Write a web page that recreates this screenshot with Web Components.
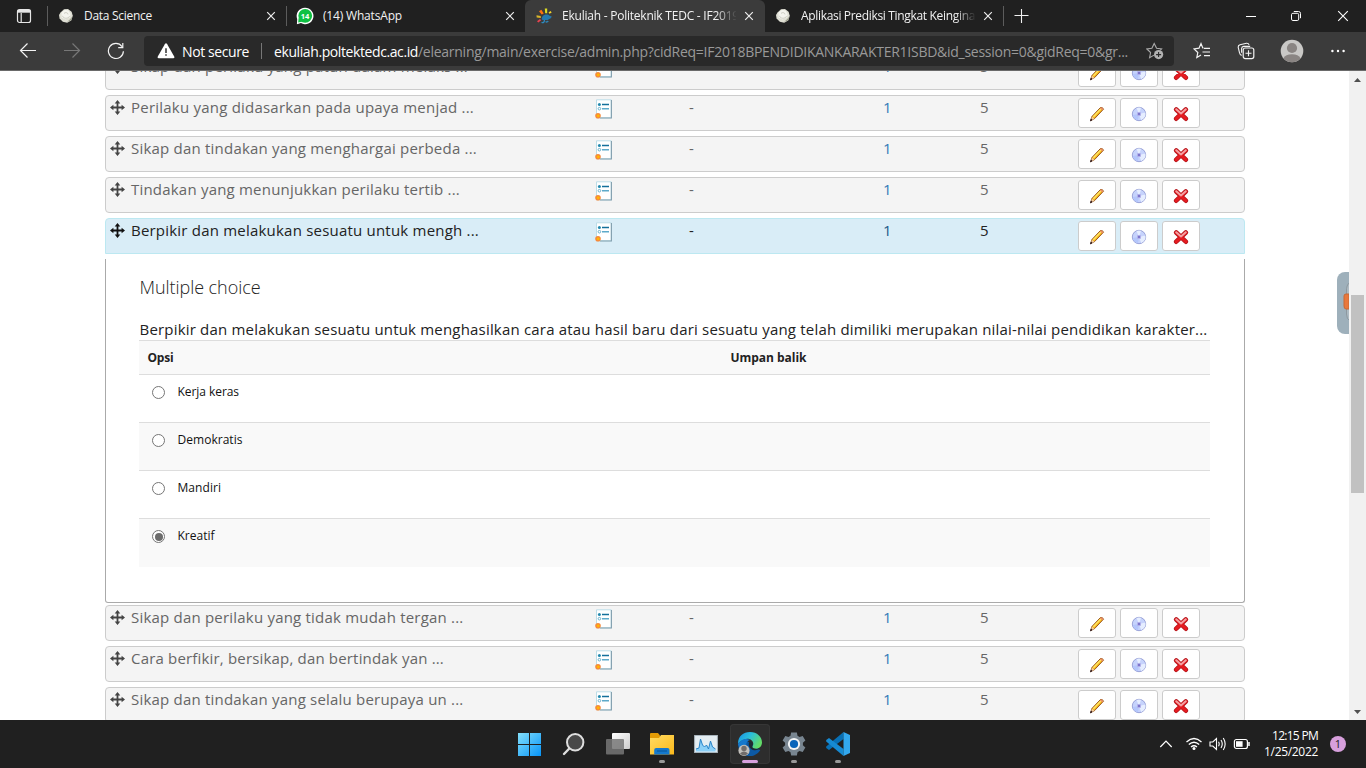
<!DOCTYPE html>
<html lang="id">
<head>
<meta charset="utf-8">
<title>Ekuliah - Politeknik TEDC</title>
<style>
html,body{margin:0;height:100%;overflow:hidden;background:#fff}
body{font-family:"Open Sans","Noto Sans",sans-serif}
</style>
</head>
<body>
<desktop-screen></desktop-screen>
<script>
// Small base: clones markup into an open shadow root.
class Base extends HTMLElement {
  constructor(){ super(); this.attachShadow({mode:'open'}); }
  connectedCallback(){
    if(this.shadowRoot.childNodes.length) return;
    const t=document.createElement('template');
    t.innerHTML='<style>*{box-sizing:border-box}svg{display:block;flex:none}'+this.css()+'</style>'+this.html();
    this.shadowRoot.append(t.content.cloneNode(true));
  }
  css(){return ''} html(){return ''}
}

// Text tracked so that it fills the width given in "w".
class TrackedText extends Base {
  css(){return ':host{display:inline-block;flex:none;white-space:nowrap}span{display:inline-block;white-space:pre}'}
  html(){return '<span><slot></slot></span>'}
  connectedCallback(){
    super.connectedCallback();
    const w=+this.getAttribute('w'), s=this.shadowRoot.querySelector('span');
    if(!w) return;
    const n=this.textContent.length, nat=s.getBoundingClientRect().width;
    s.style.letterSpacing=((w-nat)/n)+'px';
    this.style.width=w+'px';
  }
}
customElements.define('tracked-text',TrackedText);

const ICONS={
 tabs:[16,16,'<rect x="1.5" y="1.5" width="13" height="13" rx="2" fill="none" stroke="#e6e6e6" stroke-width="1.2"/><path d="M1.5 1.8h13v2.9h-13z" fill="#e6e6e6"/><path d="M5.2 5v9" stroke="#e6e6e6" stroke-width="1.2"/>'],
 flower:[16,16,'<path d="M2.5 4.5L6 1.2l4-.2 3.6 2.8 1.2 4-1.6 4.6-4 2.4-4.4-1L1.6 10.5 1 7z" fill="#dfdfd4"/><path d="M3.5 4.5l3.5-2.7 3.6.8 2 3.4-1 3.8-4 1.6-4-1.8z" fill="#f4f4ee"/><path d="M4.4 7.8c1 3 5.6 3.4 7.2.4M6 5.4c1.6-1.6 4-.6 4 1" fill="none" stroke="#c3c3b8" stroke-width=".8"/><path d="M9 14l4.2-1.8 1.2-3.8-2.4 2.8z" fill="#9a9d8a"/>'],
 whatsapp:[18,18,'<path d="M9 .8A8.2 8.2 0 1 1 5 16L.9 17.2 1.2 12A8.2 8.2 0 0 1 9 .8z" fill="#fff"/><circle cx="9.2" cy="8.8" r="6.9" fill="#0fc143"/><path d="M2.6 11L2.2 15.6 7 14.6z" fill="#0fc143"/><text x="9" y="11.6" font-family="Open Sans" font-weight="700" font-size="7.5" text-anchor="middle" fill="#fff">14</text>'],
 chamilo:[16,16,'<path d="M8.8 .5h2.4v4.8H9.2z" fill="#dcdc24"/><path d="M3 3.2L5.4 1.8l2.3 3.6-2 1.2z" fill="#ff720d"/><path d="M12.6 4.3l2.2-1.2.8 1.6-2.3 1.1z" fill="#f4d32a"/><path d="M.5 7.2l4.2.7.2 2-4.2-.5z" fill="#d9b52a"/><path d="M1 13.2l3-2.2 1.2 1.2-2.8 2.4z" fill="#e8434f"/><path d="M5.8 11.4C5.6 8 8.2 6.2 11 6.4c2 .2 2.4 1.7 4.8 2-.8 2.6-3 2.2-4.4 3.8-2-.8-4 .3-5.6-.8z" fill="#2478ae"/><path d="M5.6 14.2c1.4 1 3 .2 2.8-2.2M9.6 13.6c1 .8 2 .4 2.6-.6" fill="none" stroke="#2d8ac0" stroke-width="1.3"/>'],
 close:[10,10,'<path d="M1.2 1.2l7.6 7.6M8.8 1.2L1.2 8.8" stroke="#eee" stroke-width="1.2"/>'],
 winclose:[12,12,'<path d="M1.2 1.2l9.6 9.6M10.8 1.2l-9.6 9.6" stroke="#fff" stroke-width="1.1"/>'],
 plus:[16,16,'<path d="M7.5 1v14M.5 7.5h14" stroke="#f0f0f0" stroke-width="1.1"/>'],
 min:[10,10,'<path d="M0 5.5h10" stroke="#fff"/>'],
 restore:[12,12,'<rect x="1.5" y="3.3" width="7.2" height="7.2" rx="1.4" fill="none" stroke="#fff"/><path d="M3.8 1.5h4.7q2 0 2 2v4.7" fill="none" stroke="#fff"/>'],
 back:[18,18,'<path d="M17 8.5H1.5M8.5 1.5l-7 7 7 7" fill="none" stroke="#f3f3f3" stroke-width="1.2"/>'],
 fwd:[18,18,'<path d="M1 8.5h15.5M9.5 1.5l7 7-7 7" fill="none" stroke="#777" stroke-width="1.2"/>'],
 reload:[18,18,'<path d="M16.4 9.2A7.5 7.5 0 1 1 15 4.6M15.8 1v4.6h-4.6" fill="none" stroke="#f3f3f3" stroke-width="1.2"/>'],
 warn:[18,16,'<path d="M7.8 1.2q1.2-1.8 2.4 0l7 12.2q.8 1.6-1 1.8H1.8q-1.8-.2-1-1.8z" fill="#fff"/><path d="M9 5.3v4.6M9 11.3v1.5" stroke="#222" stroke-width="1.4"/>'],
 staradd:[18,18,'<path d="M8 13.1l-4.4 2.6 1-5.2L.9 7l5-.7L8.2 1.6l2.4 4.7 5 .7-1.2 1.2" fill="none" stroke="#aaa" stroke-width="1.1"/><circle cx="12.6" cy="12.6" r="4.6" fill="#b2b2b2"/><path d="M12.6 10.1v5M10.1 12.6h5" stroke="#2b2b2b" stroke-width="1.1"/>'],
 favs:[18,18,'<path d="M10.6 6H9.8L8 1.6 6 6.2l-5 .7 3.8 3.6-1 5.1 4.2-2.5M11 6.4h6M9.5 10h7.5M11 13.6h6" fill="none" stroke="#f3f3f3" stroke-width="1.2"/>'],
 coll:[18,18,'<rect x="6.2" y="6" width="10.6" height="10.6" rx="2" fill="none" stroke="#f3f3f3" stroke-width="1.2"/><path d="M11.5 8.3v6M8.5 11.3h6M4.7 13.4Q3 13 2.6 11L1.2 5.3Q1 3.3 3 2.8l6.5-1.6q2-.2 2.6 1.7M4.6 10.8V6.6q.1-2 2.2-2.2h6.4" fill="none" stroke="#f3f3f3" stroke-width="1.1"/>'],
 avatar:[24,24,'<circle cx="12" cy="12" r="11.3" fill="#c9c8c6"/><circle cx="12" cy="9" r="5.1" fill="#8a8583"/><path d="M3.4 19.3Q5.5 15.2 12 15.2t8.6 4.1A11.3 11.3 0 0 1 3.4 19.3z" fill="#8a8583"/>'],
 dots:[16,4,'<circle cx="2.4" cy="2" r="1.2" fill="#fff"/><circle cx="8" cy="2" r="1.2" fill="#fff"/><circle cx="13.6" cy="2" r="1.2" fill="#fff"/>'],
 move:[16,16,'<path d="M7.5 2v11M2 7.5h11" stroke="currentColor" stroke-width="1.8"/><path d="M7.5 0L10.3 3.4H4.7zM7.5 15l2.8-3.4H4.7zM0 7.5l3.4-2.8v5.6zM15 7.5l-3.4-2.8v5.6z" fill="currentColor"/>'],
 doc:[18,20,'<path d="M1.5.8h14.7v18H1.5z" fill="#fff" stroke="#bcdde8"/><path d="M16.4 1v18H5" fill="none" stroke="#829fae" stroke-width="1.1"/><circle cx="4.4" cy="5.5" r="1.5" fill="#2389ae"/><circle cx="4.4" cy="9.7" r="1.3" fill="#fff" stroke="#6cb2cd"/><path d="M7 5.5h7" stroke="#14709b" stroke-width="1.4"/><path d="M7 9.7h7" stroke="#5daaca" stroke-width="1.6"/><circle cx="3" cy="16.8" r="2.8" fill="#f68a3c"/><circle cx="3.2" cy="16.8" r="1.4" fill="#ffb800"/>'],
 pencil:[16,16,'<path d="M1.8 14.6l1.2-4.2L11.4 1.6q2.3-.8 3.1 1.6L5.6 12.6z" fill="#f9b61c" stroke="#8c4a14" stroke-width=".9"/><path d="M4.4 10.8l7.6-8" stroke="#ffe866" stroke-width="1.3"/><path d="M11 2.2l1.3-1 2 1.8-1 1.5z" fill="#ea8c6c"/><path d="M3 10.8l2.3 2-3.4 1.9z" fill="#f5d1a5"/><path d="M2.1 12.9l1 1-1.7 1z" fill="#301b20" stroke="#301b20" stroke-width=".8"/>'],
 disc:[16,16,'<circle cx="8" cy="8" r="6.7" fill="#c6d3fc" stroke="#929bd3" stroke-width=".9"/><path d="M8 8L5.5 1.9A6.5 6.5 0 0 1 10 1.8zM8 8l6.4-1.5a6.5 6.5 0 0 1-4.2 7.6z" fill="#e6eeff"/><path d="M8 8L1.8 9A6.5 6.5 0 0 0 7 14.2z" fill="#b4c6fb"/><rect x="6" y="6" width="4" height="4" rx="1" fill="#b2b0ea"/><circle cx="8" cy="8" r="1.1" fill="#7068c5"/>'],
 del:[16,16,'<path d="M3.2 3.5l9.6 9.2M12.8 3.5l-9.6 9.2" stroke="#b5161c" stroke-width="4.6" stroke-linecap="round"/><path d="M3.2 3.5l9.6 9.2M12.8 3.5l-9.6 9.2" stroke="#e61b20" stroke-width="3" stroke-linecap="round"/><path d="M3.2 3.3L8 7.4l4.8-4.1" fill="none" stroke="#f5a0a2" stroke-width="2" stroke-linecap="round" stroke-linejoin="round"/>'],
 start:[24,24,'<defs><linearGradient id="g" x2="1" y2="1"><stop stop-color="#83dffb"/><stop offset="1" stop-color="#0794f7"/></linearGradient></defs><path d="M0 1h11v11H0zM12 1h11v11H12zM0 13h11v11H0zM12 13h11v11H12z" fill="url(#g)"/>'],
 search:[24,24,'<circle cx="13.2" cy="10.3" r="8.2" fill="#484848" stroke="#dedede" stroke-width="2"/><path d="M7.3 16.5L2 22" stroke="#dedede" stroke-width="2.4" stroke-linecap="round"/>'],
 task:[26,24,'<defs><linearGradient id="g" x2="1" y2="1"><stop stop-color="#fff"/><stop offset="1" stop-color="#ccc"/></linearGradient></defs><rect x="7" y="1" width="18" height="16" rx="1" fill="url(#g)"/><rect x="1" y="7" width="18" height="15.5" rx="1" fill="#777" fill-opacity=".85"/>'],
 folder:[24,24,'<defs><linearGradient id="g" y2="1"><stop stop-color="#ffdb63"/><stop offset="1" stop-color="#fbb91b"/></linearGradient></defs><path d="M0 2q0-1 1-1h7l2 2.5V9H0z" fill="#e39b05"/><path d="M0 6h9l2-3h13v19.6H0z" fill="url(#g)"/><path d="M4.2 22.6V18q0-2 2-2h11.3q2 0 2 2v4.6z" fill="#1579cd"/><path d="M7 19h10" stroke="#075596"/>'],
 chart:[24,24,'<rect x=".6" y="3.5" width="22.8" height="17" fill="#e4edf2" stroke="#a9b5bd"/><path d="M2 17l3-1 1.5-9 2 6 2 2 2-2 2 4 2-8 2 6 3 2v2.5H2z" fill="#8bd0f8"/><path d="M2 17l3-1 1.5-9 2 6 2 2 2-2 2 4 2-8 2 6 3 2" fill="none" stroke="#2583c9"/>'],
 edge:[24,24,'<defs><linearGradient id="g" x2="1" y2=".5"><stop stop-color="#168ee4"/><stop offset=".5" stop-color="#2bbfda"/><stop offset="1" stop-color="#62db68"/></linearGradient></defs><path d="M0 12a12 12 0 0 0 22.3 6.3L19 16 9 9z" fill="#0c59a4"/><path d="M0 12C-.2 4.5 5 0 12 0c7.2 0 12 5 12 10.5 0 4-3 6.4-6.8 6.2-3 0-4-1.4-2.4-3C17 9 11 5 5.8 7.7 2.5 9 .5 10.8 0 12z" fill="url(#g)"/><path d="M0 12C2 8 8 5.5 12 8c-4 1-4.5 5-3 8l-7 2z" fill="#1578cc"/><path d="M11.7 9.6C9.5 12 11 17.5 16 18.2c2.5.3 4.4-.4 6-1.4-4 .4-8-.2-7.6-2.6 1-1.600 .3-4-2.7-4.600z" fill="#1d2a34"/><circle cx="6" cy="18.4" r="5.6" fill="#c2c0bc"/><circle cx="6" cy="16.5" r="2.7" fill="#716d6b"/><path d="M2 21.5q4-3.800 8 0-4 4.100-8 0z" fill="#716d6b"/>'],
 gear:[24,24,'<path d="M9.100 .6h5.800l.6 3.200 2 1.100 3.200-1 2.700 4.700-2.500 2.200v2.400l2.500 2.200-2.700 4.700-3.200-1-2 1.100-.6 3.200H9.100l-.6-3.200-2-1.100-3.200 1L.6 15.400l2.500-2.200v-2.400L.6 8.600l2.700-4.700 3.200 1 2-1.100z" fill="#788590"/><circle cx="12" cy="12" r="6.100" fill="#f2f4f5"/><circle cx="12" cy="12" r="4.100" fill="#0764ba"/>'],
 code:[24,24,'<path d="M17.5 0v7L3 18.100.2 16V14.500z" fill="#0870b5"/><path d="M17.5 24v-7L3 6 .2 8.100V9.500z" fill="#168ad2"/><path d="M17.500 0L24 3v18l-6.500 3z" fill="#32a8ee"/>'],
 chev:[14,8,'<path d="M1.300 7L7 1.200 12.700 7" fill="none" stroke="#fff" stroke-width="1.200"/>'],
 wifi:[18,14,'<path d="M1.500 5q7.500-7 15 0M3.800 7.600q5.200-4.700 10.400 0M6 10q3-2.500 6 0" fill="none" stroke="#fff" stroke-width="1.300"/><circle cx="9" cy="11.500" r="1.500" fill="#fff"/>'],
 sound:[18,14,'<path d="M1 5h2.800L7.500 1.500v11L3.800 9H1z" fill="none" stroke="#fff" stroke-width="1.100"/><path d="M9.500 4.800q1.400 2.200 0 4.400M12 3q2.500 4 0 8M14.300 1q3.700 6 0 12" fill="none" stroke="#fff" stroke-width="1.100"/>'],
 batt:[18,12,'<rect x="1.400" y="1.500" width="13" height="9" rx="2" fill="none" stroke="#fff" stroke-width="1.200"/><path d="M3 3.200h6.600v5.600H3z" fill="#fff"/><path d="M16 4v4" stroke="#fff" stroke-width="1.500"/>']
};
customElements.define('ui-icon',class extends Base{
  css(){return ':host{display:block;flex:none;line-height:0}'}
  html(){const [w,h,b]=ICONS[this.getAttribute('name')];return `<svg width="${w}" height="${h}" viewBox="0 0 ${w} ${h}">${b}</svg>`}
});

customElements.define('browser-tab',class extends Base{
  css(){return `:host{display:flex;width:239px;height:32px;align-items:center;color:#f2f2f2;font-size:12px;border-radius:6px 6px 0 0}
  :host([active]){background:#3b3b3b;width:240px;margin-left:-1px;padding-left:1px;box-sizing:border-box}
  .f{width:18px;margin-left:9px;display:flex;justify-content:center}
  .t{margin-left:9px;width:174px;overflow:hidden;line-height:20px;height:20px}
  :host([long]) .t{-webkit-mask-image:linear-gradient(90deg,#000 154px,transparent 175px);mask-image:linear-gradient(90deg,#000 154px,transparent 175px)}
  .c{margin-left:8px}`}
  html(){return `<span class="f"><ui-icon name="${this.getAttribute('icon')}"></ui-icon></span><div class="t"><slot></slot></div><ui-icon class="c" name="close"></ui-icon>`}
});

customElements.define('browser-chrome',class extends Base{
  css(){return `:host{display:block;height:71px;background:#3b3b3b;border-bottom:1px solid #6a6a6a;box-sizing:border-box}
  .strip{display:flex;height:32px;background:#202020;align-items:center}
  .first{width:48px;height:32px;display:flex;align-items:center;padding-left:16px}
  .sep{width:1px;height:20px;background:#5c5c5c;margin-left:-1px}
  .plus{margin-left:10px}.wc{margin-left:auto;display:flex;align-items:center;padding-right:17px;gap:35px}
  .wc ui-icon:first-child{margin-right:-1px}
  .bar{display:flex;height:38px;align-items:center;padding-left:19px}
  .nav{display:flex;gap:26px;width:125px}
  .addr{width:1030px;height:30px;background:#292929;border-radius:4px;display:flex;align-items:center;padding-left:13px;font-size:14px;color:#fff}
  .ns{margin-left:7px;margin-right:12px}.d{width:1px;height:16px;background:#777;margin-right:12px}
  .path{color:#999}.star{margin-left:18px}
  .tools{display:flex;align-items:center;padding-left:19px}`}
  html(){return `<div class="strip"><div class="first"><ui-icon name="tabs"></ui-icon></div><i class="sep"></i>
  <browser-tab icon="flower"><tracked-text w="68">Data Science</tracked-text></browser-tab><i class="sep"></i>
  <browser-tab icon="whatsapp"><tracked-text w="79">(14) WhatsApp</tracked-text></browser-tab>
  <browser-tab active long icon="chamilo"><tracked-text w="177">Ekuliah - Politeknik TEDC - IF2019</tracked-text></browser-tab>
  <browser-tab long icon="flower"><tracked-text w="174">Aplikasi Prediksi Tingkat Keingina</tracked-text></browser-tab><i class="sep"></i>
  <ui-icon class="plus" name="plus"></ui-icon>
  <div class="wc"><ui-icon name="min"></ui-icon><ui-icon name="restore"></ui-icon><ui-icon name="winclose"></ui-icon></div></div>
  <div class="bar"><div class="nav"><ui-icon name="back"></ui-icon><ui-icon name="fwd"></ui-icon><ui-icon name="reload"></ui-icon></div>
  <div class="addr"><ui-icon name="warn"></ui-icon><tracked-text class="ns" w="67">Not secure</tracked-text><i class="d"></i><tracked-text w="144">ekuliah.poltektedc.ac.id</tracked-text><tracked-text class="path" w="710">/elearning/main/exercise/admin.php?cidReq=IF2018BPENDIDIKANKARAKTER1ISBD&amp;id_session=0&amp;gidReq=0&amp;gr...</tracked-text><ui-icon class="star" name="staradd"></ui-icon></div>
  <div class="tools"><ui-icon name="favs"></ui-icon><ui-icon name="coll" style="margin-left:26px"></ui-icon><ui-icon name="avatar" style="margin-left:25px"></ui-icon><ui-icon name="dots" style="margin-left:26px"></ui-icon></div></div>`}
});

customElements.define('icon-button',class extends Base{
  css(){return ':host{display:flex;align-items:center;justify-content:center;box-sizing:border-box;width:38px;height:30px;border:1px solid #ccc;border-radius:3px;background:#fff;padding-top:2px}'}
  html(){return `<ui-icon name="${this.getAttribute('name')}"></ui-icon>`}
});

customElements.define('question-row',class extends Base{
  css(){return `:host{display:grid;grid-template-columns:489px 94px 194px 97px 98px 1fr;box-sizing:border-box;height:36px;border:1px solid #ccc;border-radius:4px;background:#f4f4f4;margin-bottom:5px;color:#666;font-size:15px;line-height:22px;overflow:hidden}
  :host([open]){background:#d9edf7;border-color:#bce8f1;color:#222;border-radius:4px 4px 0 0}
  .a{display:flex;padding-left:4px}.a ui-icon{margin:4px 5px 0 0;color:#444}:host([open]) .a ui-icon{color:#111}
  .q{padding-top:3px}.n{color:#337ab7}:host([open]) .n{color:#225a88}
  .b{display:flex;gap:4px;padding-top:2px}`}
  html(){return `<div class="a"><ui-icon name="move"></ui-icon><tracked-text w="${this.getAttribute('w')}">${this.getAttribute('label')}</tracked-text></div>
  <div class="q"><ui-icon name="doc"></ui-icon></div><div>-</div><div class="n">1</div><div>5</div>
  <div class="b"><icon-button name="pencil"></icon-button><icon-button name="disc"></icon-button><icon-button name="del"></icon-button></div>`}
});

customElements.define('answer-option',class extends Base{
  css(){return `:host{display:flex;box-sizing:border-box;height:48px;border-top:1px solid #ddd;padding:9px 0 0 12px;font-size:12px;line-height:15px;color:#111}
  i{width:13px;height:13px;border:1px solid #767676;border-radius:50%;margin:2px 12.5px 0 1px;display:flex;align-items:center;justify-content:center;background:#fff}
  :host([checked]) i:after{content:"";width:8px;height:8px;border-radius:50%;background:#6c6c6c}`}
  html(){return '<i></i><slot></slot>'}
});

customElements.define('question-detail',class extends Base{
  css(){return `:host{display:block;box-sizing:border-box;height:344px;border:1px solid #aaa;border-top:0;border-radius:0 0 3px 3px;margin-bottom:2px;padding:16px 33px 0;color:#222}
  h4{margin:0 0 0 .5px;font-weight:300;font-size:18px;line-height:24px}
  p{margin:19px 0 0 .5px;font-size:15px;line-height:22px}
  .h{display:grid;grid-template-columns:583px 1fr;height:34px;border-top:1px solid #ddd;background:#f9f9f9;padding-left:8.5px;font-weight:700;font-size:12px;line-height:33px;width:1071px}
  .opts{width:1071px}answer-option:nth-child(even){background:#f9f9f9}answer-option:last-child{height:49px}`}
  html(){return `<h4><tracked-text w="121">Multiple choice</tracked-text></h4>
  <p><tracked-text w="1068">Berpikir dan melakukan sesuatu untuk menghasilkan cara atau hasil baru dari sesuatu yang telah dimiliki merupakan nilai-nilai pendidikan karakter...</tracked-text></p>
  <div class="h"><div><tracked-text w="26">Opsi</tracked-text></div><div><tracked-text w="76">Umpan balik</tracked-text></div></div>
  <div class="opts"><answer-option><tracked-text w="61.5">Kerja keras</tracked-text></answer-option><answer-option><tracked-text w="65">Demokratis</tracked-text></answer-option><answer-option><tracked-text w="43.5">Mandiri</tracked-text></answer-option><answer-option checked><tracked-text w="37">Kreatif</tracked-text></answer-option></div>`}
});

customElements.define('scroll-bar',class extends Base{
  css(){return `:host{display:flex;flex-direction:column;align-items:center;width:17px;background:#f1f1f1;box-sizing:border-box;padding:7px 0 6px}
  i{width:13px;height:198px;background:#c1c1c1;margin:213px 0 auto}`}
  html(){return '<svg width="7" height="4"><path d="M0 4L3.5 0 7 4z" fill="#505050"/></svg><i></i><svg width="7" height="4"><path d="M0 0L3.5 4 7 0z" fill="#505050"/></svg>'}
});

customElements.define('page-view',class extends Base{
  css(){return `:host{display:flex;height:649px;overflow:hidden;background:#fff}
  main{width:1140px;margin:-17px 0 0 105px;flex:none}
  .side{margin-left:92px;width:12px;flex:none;padding-top:201px;overflow:hidden}
  scroll-bar{flex:none}`}
  html(){
    const r=(t,w,o='')=>`<question-row ${o} w="${w}" label="${t}"></question-row>`;
    return `<main>${r('Sikap dan perilaku yang patuh dalam melaks ...',337)}${r('Perilaku yang didasarkan pada upaya menjad ...',343)}${r('Sikap dan tindakan yang menghargai perbeda ...',346)}${r('Tindakan yang menunjukkan perilaku tertib ...',329)}${r('Berpikir dan melakukan sesuatu untuk mengh ...',348,'open')}
    <question-detail></question-detail>
    ${r('Sikap dan perilaku yang tidak mudah tergan ...',332.5)}${r('Cara berfikir, bersikap, dan bertindak yan ...',313)}${r('Sikap dan tindakan yang selalu berupaya un ...',332.5)}</main>
    <div class="side"><svg width="12" height="62"><rect width="28" height="62" rx="8" fill="#9eb0bb"/><path d="M13 10Q9 13 9.500 20v22q0 5 3.500 7" fill="#aebbc3" stroke="#8d989f"/><path d="M12 22H9q-2 0-2 2v10q0 3 2 3h3z" fill="#e9783c" stroke="#c86935"/></svg></div>
    <scroll-bar></scroll-bar>`}
});

customElements.define('task-item',class extends Base{
  css(){return `:host{display:flex;flex-direction:column;align-items:center;box-sizing:border-box;width:40px;height:40px;padding-top:8px;border-radius:4px}
  :host([active]){background:#2d2d2d;box-shadow:inset 0 0 0 1px #363636}
  i{width:6px;height:3px;border-radius:2px;background:#999;margin-top:4px;visibility:hidden}
  :host([running]) i{visibility:visible}:host([active]) i{width:16px;background:#d8a0dd}`}
  html(){return `<ui-icon name="${this.getAttribute('name')}"></ui-icon><i></i>`}
});

customElements.define('task-bar',class extends Base{
  css(){return `:host{display:flex;height:48px;background:#202020;color:#fff;font-size:12px}
  .apps{display:flex;gap:4px;padding:4px 0 0 510px;flex:none}
  .tray{display:flex;align-items:center;margin-left:auto;padding-right:20px}
  .clock{display:flex;flex-direction:column;align-items:flex-end;line-height:16px;margin-left:13px;width:54px}
  b{width:16px;height:16px;border-radius:50%;background:#d8a0dd;color:#222;font-weight:400;font-size:11px;line-height:16px;text-align:center;margin-left:12px}`}
  html(){return `<div class="apps"><task-item name="start"></task-item><task-item name="search"></task-item><task-item name="task"></task-item><task-item running name="folder"></task-item><task-item name="chart"></task-item><task-item running active name="edge"></task-item><task-item running name="gear"></task-item><task-item running name="code"></task-item></div>
  <div class="tray"><ui-icon name="chev"></ui-icon><ui-icon name="wifi" style="margin-left:12px"></ui-icon><ui-icon name="sound" style="margin-left:6px"></ui-icon><ui-icon name="batt" style="margin-left:6px"></ui-icon><div class="clock"><tracked-text w="46">12:15 PM</tracked-text><tracked-text w="54">1/25/2022</tracked-text></div><b>1</b></div>`}
});

customElements.define('desktop-screen',class extends Base{
  css(){return ':host{display:flex;flex-direction:column;width:1366px;height:768px;overflow:hidden}'}
  html(){return '<browser-chrome></browser-chrome><page-view></page-view><task-bar></task-bar>'}
});
</script>
</body>
</html>
